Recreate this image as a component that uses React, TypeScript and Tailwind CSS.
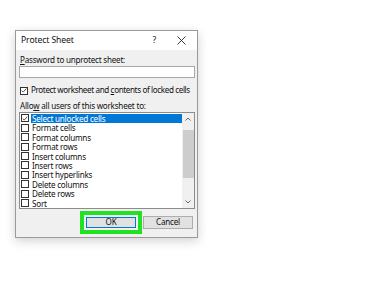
import React from "react";

const items = [
  "Select unlocked cells",
  "Format cells",
  "Format columns",
  "Format rows",
  "Insert columns",
  "Insert rows",
  "Insert hyperlinks",
  "Delete columns",
  "Delete rows",
  "Sort",
];

function Box({ checked }: { checked?: boolean }) {
  return (
    <div className="w-[8px] h-[8px] border border-[#333] bg-white flex items-center justify-center shrink-0">
      {checked && (
        <svg width="7" height="7" viewBox="0 0 7 7">
          <path d="M0.8 3.6 L2.6 5.4 L6.2 1.2" stroke="#222" strokeWidth="0.9" fill="none" />
        </svg>
      )}
    </div>
  );
}

export default function App() {
  return (
    <div
      className="w-[375px] h-[300px] bg-white overflow-hidden pt-[30px] pl-[15px]"
      style={{ fontFamily: "'Noto Sans', 'Liberation Sans', sans-serif" }}
    >
      <div className="w-[183px] h-[208px] border border-[#9a9a9a] bg-[#f0f0f0] flex flex-col shadow-[0_3px_10px_rgba(0,0,0,0.18)] text-[8.1px] tracking-[-0.22px] leading-none text-[#111]">
        <div className="h-[19px] bg-white flex items-center pl-[5px] pr-[11px] shrink-0">
          <span className="text-[8.6px] tracking-[-0.1px]">Protect Sheet</span>
          <span className="ml-auto text-[8.6px] mr-[21px]">?</span>
          <svg width="9" height="9" viewBox="0 0 9 9">
            <path d="M0.5 0.5 L8.5 8.5 M8.5 0.5 L0.5 8.5" stroke="#222" strokeWidth="0.9" />
          </svg>
        </div>
        <div className="flex flex-col pl-[3px] pr-[3px]">
          <div className="h-[10px] mt-[5px] flex items-center pl-[1px]">
            <span><span className="underline">P</span>assword to unprotect sheet:</span>
          </div>
          <div className="h-[12px] mt-[1px] bg-white border border-[#a8a8a8] w-[176px]" />
          <div className="flex items-center gap-[3px] mt-[8px] h-[9px] pl-[1px]">
            <Box checked />
            <span className="whitespace-nowrap tracking-[-0.38px]">
              Protect worksheet and <span className="underline">c</span>ontents of locked cells
            </span>
          </div>
          <div className="h-[10px] mt-[6px] flex items-center pl-[1px]">
            <span>Allo<span className="underline">w</span> all users of this worksheet to:</span>
          </div>
          <div className="mt-[1px] w-[176px] h-[97px] bg-white border border-[#8c8c8c] flex">
            <div className="flex-1 flex flex-col pt-[0.5px]">
              {items.map((t, i) => (
                <div key={t} className="h-[9.5px] flex items-center gap-[2px] pl-[1px]">
                  <Box checked={i === 0} />
                  <div
                    className={
                      i === 0
                        ? "flex-1 h-full bg-[#0078d7] text-white flex items-center pl-[1px] leading-[9px]"
                        : "flex-1 h-full flex items-center pl-[1px] leading-[9px]"
                    }
                  >
                    {t}
                  </div>
                </div>
              ))}
            </div>
            <div className="w-[12px] bg-[#f0f0f0] flex flex-col items-center">
              <div className="h-[12px] flex items-center justify-center">
                <svg width="6" height="4" viewBox="0 0 6 4">
                  <path d="M0.5 3.5 L3 1 L5.5 3.5" stroke="#555" strokeWidth="0.9" fill="none" />
                </svg>
              </div>
              <div className="mt-[5px] w-[11px] h-[48px] bg-[#cdcdcd]" />
              <div className="mt-auto h-[12px] flex items-center justify-center">
                <svg width="6" height="4" viewBox="0 0 6 4">
                  <path d="M0.5 0.5 L3 3 L5.5 0.5" stroke="#555" strokeWidth="0.9" fill="none" />
                </svg>
              </div>
            </div>
          </div>
          <div className="flex justify-end items-center mt-[2px] pr-[1px]">
            <div className="border-[4px] border-[#22e022] p-[2px] w-[62px] h-[23px]">
              <div className="w-full h-full border border-[#0078d7] bg-[#e1e1e1] flex items-center justify-center">
                OK
              </div>
            </div>
            <div className="ml-[1px] w-[50px] h-[13px] border border-[#adadad] bg-[#e1e1e1] flex items-center justify-center">
              Cancel
            </div>
          </div>
        </div>
      </div>
    </div>
  );
}
